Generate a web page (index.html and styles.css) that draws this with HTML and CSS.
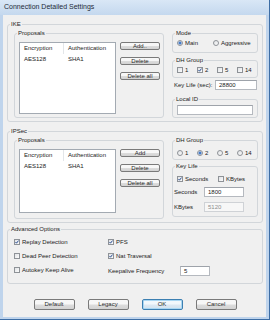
FILE: index.html
```html
<!DOCTYPE html>
<html lang="en">

<head>
    <meta charset="UTF-8">
    <meta name="viewport" content="width=device-width, initial-scale=1.0">
    <link rel="stylesheet" href="styles.css">
    <title>Connection Detailed Settings</title>
</head>

<body>

    <div class="window">
        <div class="titlebar">Connection Detailed Settings</div>
        <div class="dialog">

            <!-- IKE -->
            <fieldset class="group outer ike">
                <legend>IKE</legend>
                <div class="split">
                    <fieldset class="group proposals">
                        <legend>Proposals</legend>
                        <div class="split">
                            <div class="list ike-list">
                                <div class="list-head"><span class="col1">Encryption</span><span class="col2">Authentication</span></div>
                                <div class="list-row"><span class="col1">AES128</span><span class="col2">SHA1</span></div>
                            </div>
                            <div class="btns">
                                <div class="btn">Add..</div>
                                <div class="btn">Delete</div>
                                <div class="btn">Delete all</div>
                            </div>
                        </div>
                    </fieldset>
                    <div class="side">
                        <fieldset class="group mode">
                            <legend>Mode</legend>
                            <div class="opts mode-opts">
                                <div class="opt"><span class="radio on"></span>Main</div>
                                <div class="opt"><span class="radio"></span>Aggressive</div>
                            </div>
                        </fieldset>
                        <fieldset class="group dh">
                            <legend>DH Group</legend>
                            <div class="opts">
                                <div class="opt"><span class="check"></span>1</div>
                                <div class="opt"><span class="check on"><svg viewBox="0 0 4 4"><polyline points="0.5,2 1.5,3.2 3.5,0.6" /></svg></span>2</div>
                                <div class="opt"><span class="check"></span>5</div>
                                <div class="opt"><span class="check"></span>14</div>
                            </div>
                        </fieldset>
                        <div class="field keylife-sec">
                            <span class="field-label">Key Life (sec):</span>
                            <div class="input w42">28800</div>
                        </div>
                        <fieldset class="group localid">
                            <legend>Local ID</legend>
                            <div class="input w76"></div>
                        </fieldset>
                    </div>
                </div>
            </fieldset>

            <!-- IPSec -->
            <fieldset class="group outer ipsec">
                <legend>IPSec</legend>
                <div class="split">
                    <fieldset class="group proposals">
                        <legend>Proposals</legend>
                        <div class="split">
                            <div class="list ipsec-list">
                                <div class="list-head"><span class="col1">Encryption</span><span class="col2">Authentication</span></div>
                                <div class="list-row"><span class="col1">AES128</span><span class="col2">SHA1</span></div>
                            </div>
                            <div class="btns">
                                <div class="btn">Add</div>
                                <div class="btn">Delete</div>
                                <div class="btn">Delete all</div>
                            </div>
                        </div>
                    </fieldset>
                    <div class="side">
                        <fieldset class="group dh2">
                            <legend>DH Group</legend>
                            <div class="opts">
                                <div class="opt"><span class="radio"></span>1</div>
                                <div class="opt"><span class="radio on"></span>2</div>
                                <div class="opt"><span class="radio"></span>5</div>
                                <div class="opt"><span class="radio"></span>14</div>
                            </div>
                        </fieldset>
                        <fieldset class="group keylife">
                            <legend>Key Life</legend>
                            <div class="opts keylife-opts">
                                <div class="opt"><span class="check on"><svg viewBox="0 0 4 4"><polyline points="0.5,2 1.5,3.2 3.5,0.6" /></svg></span>Seconds</div>
                                <div class="opt"><span class="check"></span>KBytes</div>
                            </div>
                            <div class="field">
                                <span class="field-label short">Seconds</span>
                                <div class="input w40">1800</div>
                            </div>
                            <div class="field kb">
                                <span class="field-label short">KBytes</span>
                                <div class="input w40 disabled">5120</div>
                            </div>
                        </fieldset>
                    </div>
                </div>
            </fieldset>

            <!-- Advanced -->
            <fieldset class="group outer adv">
                <legend>Advanced Options</legend>
                <div class="adv-grid">
                    <div class="opt"><span class="check on"><svg viewBox="0 0 4 4"><polyline points="0.5,2 1.5,3.2 3.5,0.6" /></svg></span>Replay Detection</div>
                    <div class="opt"><span class="check on"><svg viewBox="0 0 4 4"><polyline points="0.5,2 1.5,3.2 3.5,0.6" /></svg></span>PFS</div>
                    <div class="opt"><span class="check"></span>Dead Peer Detection</div>
                    <div class="opt"><span class="check on"><svg viewBox="0 0 4 4"><polyline points="0.5,2 1.5,3.2 3.5,0.6" /></svg></span>Nat Traversal</div>
                    <div class="opt"><span class="check"></span>Autokey Keep Alive</div>
                    <div class="field">
                        <span class="field-label freq">Keepalive Frequency</span>
                        <div class="input w30">5</div>
                    </div>
                </div>
            </fieldset>

            <div class="footer">
                <div class="btn big">Default</div>
                <div class="btn big">Legacy</div>
                <div class="btn big ok">OK</div>
                <div class="btn big">Cancel</div>
            </div>

        </div>
    </div>

</body>

</html>
```

FILE: styles.css
```css
* {
    margin: 0;
    padding: 0;
    box-sizing: border-box;
}

body {
    background-color: #fff;
    font-family: "Liberation Sans", Arial, sans-serif;
    font-size: 6px;
    color: #1b1b1b;
}

.window {
    width: 270px;
    height: 320px;
    background-color: #bfd4ec;
    border-right: 1px solid #3d6da4;
    border-bottom: 1px solid #3d6da4;
}

.titlebar {
    height: 15px;
    padding-left: 4px;
    line-height: 13px;
    font-size: 7px;
    color: #1e2a38;
    background: linear-gradient(#d9e7f6, #c4d8ee);
}

.dialog {
    width: 263px;
    height: 302px;
    margin-left: 3px;
    padding: 5px 3px 0 4px;
    background-color: #f0f0f0;
    display: flex;
    flex-direction: column;
}

/* group boxes */
.group {
    border: 1px solid #d2d6da;
    border-radius: 3px;
    min-width: 0;
}

.group legend {
    height: 8px;
    line-height: 8px;
    padding: 0 1px;
    margin-left: -2px;
}

.outer > legend {
    margin-left: -4px;
}

.split {
    display: flex;
    align-items: flex-start;
}

.ike {
    padding: 1px 4px 3px 6px;
}

.ipsec {
    margin-top: 5px;
    padding: 1px 4px 3px 6px;
}

.proposals {
    width: 150px;
    padding: 5px 3px 3px 4px;
}

.ipsec .proposals {
    padding-bottom: 5px;
}

.side {
    width: 86px;
    margin-left: 8px;
    display: flex;
    flex-direction: column;
}

/* list view */
.list {
    width: 97px;
    background-color: #fff;
    border: 1px solid #a3aab2;
}

.ike-list {
    height: 72px;
}

.ipsec-list {
    height: 64px;
}

.list-head,
.list-row {
    display: flex;
    height: 11px;
    line-height: 11px;
}

.col1 {
    width: 44px;
    padding-left: 4px;
}

.col2 {
    padding-left: 4px;
}

.list-head .col1 {
    border-right: 1px solid #e3e6e9;
}

/* buttons */
.btns {
    width: 40px;
    margin-left: 4px;
    display: flex;
    flex-direction: column;
    gap: 7px;
}

.btn {
    height: 8px;
    line-height: 6px;
    text-align: center;
    border: 1px solid #7a7a7a;
    border-radius: 2px;
    background: linear-gradient(#f7f7f7 45%, #dcdcdc 55%, #d2d2d2);
    color: #2a2a2a;
}

.btn.big {
    width: 41px;
    height: 11px;
    line-height: 9px;
}

.btn.ok {
    border-color: #3c7fb1;
    background: linear-gradient(#f2f8fc 45%, #dde9f3 55%, #d2e2ee);
    box-shadow: inset 0 0 0 1px #a9d7f3;
}

/* option rows */
.opts {
    display: grid;
    grid-template-columns: repeat(4, 20px);
    height: 8px;
}

.mode-opts {
    grid-template-columns: 36px auto;
}

.keylife-opts {
    grid-template-columns: 41px auto;
}

.opt {
    display: flex;
    align-items: center;
    height: 8px;
    white-space: nowrap;
}

.radio,
.check {
    width: 6px;
    height: 6px;
    margin-right: 2px;
    flex-shrink: 0;
    border: 1px solid #8e9297;
    background: linear-gradient(135deg, #e1e3e6, #fbfbfb);
}

.radio {
    border-radius: 50%;
}

.radio.on {
    background: radial-gradient(circle, #2d63b5 0, #5b8fd6 1.3px, #eef2f6 1.9px);
}

.check svg {
    display: block;
    width: 4px;
    height: 4px;
}

.check polyline {
    fill: none;
    stroke: #2c4f92;
    stroke-width: 1;
}

.mode {
    padding: 2px 3px 5px 4px;
}

.dh {
    margin-top: 3px;
    padding: 2px 3px 3px 4px;
}

.dh2 {
    padding: 5px 3px 2px 4px;
}

.keylife {
    margin-top: 2px;
    padding: 5px 3px 4px 4px;
}

.localid {
    margin-top: 5px;
    padding: 2px 4px 2px 4px;
}

/* label + input rows */
.field {
    display: flex;
    align-items: center;
    height: 10px;
}

.keylife-sec {
    margin-top: 2px;
    padding-left: 2px;
}

.field-label {
    width: 41px;
    white-space: nowrap;
}

.field-label.short {
    width: 30px;
    margin-left: -3px;
}

.keylife .field {
    margin-top: 4px;
}

.keylife .field.kb {
    margin-top: 5px;
}

.field-label.freq {
    width: 72px;
}

.input {
    height: 10px;
    line-height: 8px;
    padding-left: 3px;
    background-color: #fff;
    border: 1px solid #b5b9bf;
    border-top-color: #9ea3aa;
}

.input.disabled {
    background-color: #f7f7f7;
    border-color: #cfd2d6;
    color: #8d8d8d;
}

.w42 {
    width: 42px;
}

.w40 {
    width: 40px;
}

.w30 {
    width: 30px;
}

.w76 {
    width: 76px;
}

/* advanced */
.adv {
    margin-top: 2px;
    padding: 5px 4px 7px 6px;
}

.adv-grid {
    display: grid;
    grid-template-columns: 94px auto;
    grid-template-rows: 8px 8px 10px;
    row-gap: 6px;
}

.footer {
    margin-top: 15px;
    display: flex;
    justify-content: center;
    gap: 13px;
}
```
